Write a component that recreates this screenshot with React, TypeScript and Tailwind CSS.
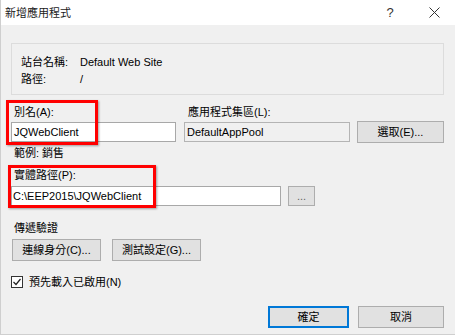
import React from 'react'

const font = { fontFamily: '"Liberation Sans", "Noto Sans CJK TC", sans-serif' }

function Btn({ children, className = '' }: { children: React.ReactNode; className?: string }) {
  return (
    <button className={`h-[22px] bg-[#e1e1e1] border border-[#adadad] text-[11px] text-black flex items-center justify-center ${className}`}>
      {children}
    </button>
  )
}

export default function App() {
  return (
    <div className="relative w-[455px] h-[335px] flex flex-col bg-[#f0f0f0] text-[11px] text-black leading-[14px] border-l border-b border-[#cfcfcf] overflow-hidden" style={font}>
      {/* title bar */}
      <div className="h-[25px] bg-white flex items-center pl-[4px] shrink-0">
        <span className="text-[11px] text-[#1a1a1a]">新增應用程式</span>
        <span className="ml-auto w-[16px] text-center text-[13px] text-[#333]">?</span>
        <svg className="ml-[31px] mr-[15px]" width="11" height="11" viewBox="0 0 11 11">
          <path d="M0.5 0.5 L10.5 10.5 M10.5 0.5 L0.5 10.5" stroke="#333" strokeWidth="1" />
        </svg>
      </div>

      <div className="flex flex-col pl-[10px] pr-[11px]">
        {/* site info */}
        <div className="mt-[18px] h-[52px] border border-[#dcdcdc] pl-[9px] pt-[11px] flex flex-col gap-[3px]">
          <div className="flex"><span className="w-[59px]">站台名稱:</span><span>Default Web Site</span></div>
          <div className="flex"><span className="w-[59px]">路徑:</span><span>/</span></div>
        </div>

        {/* alias + pool */}
        <div className="mt-[10px] flex items-end">
          <div className="flex flex-col w-[165px]">
            <span className="pl-[3px]">別名(A):</span>
            <div className="mt-[3px] h-[20px] bg-white border border-[#a8a8a8] flex items-center px-[2px]">JQWebClient</div>
          </div>
          <div className="flex flex-col w-[166px] ml-[8px]">
            <span className="pl-[4px]">應用程式集區(L):</span>
            <div className="mt-[3px] h-[20px] bg-[#f0f0f0] border border-[#b4b4b4] flex items-center px-[2px]">DefaultAppPool</div>
          </div>
          <Btn className="ml-[7px] w-[87px] mb-[-1px]">選取(E)...</Btn>
        </div>

        <span className="mt-[4px] pl-[3px]">範例: 銷售</span>

        {/* physical path */}
        <span className="mt-[8px] pl-[3px]">實體路徑(P):</span>
        <div className="mt-[4px] flex items-center">
          <div className="w-[270px] h-[20px] bg-white border border-[#a8a8a8] flex items-center px-[1px]">C:\EEP2015\JQWebClient</div>
          <Btn className="ml-[7px] w-[27px] !h-[20px] !text-[#666]">...</Btn>
        </div>

        {/* pass-through auth */}
        <span className="mt-[15px] pl-[3px]">傳遞驗證</span>
        <div className="mt-[4px] flex pl-[1px] gap-[11px]">
          <Btn className="w-[89px]">連線身分(C)...</Btn>
          <Btn className="w-[89px]">測試設定(G)...</Btn>
        </div>

        <div className="mt-[14px] flex items-center">
          <div className="w-[12px] h-[12px] bg-white border border-[#333] flex items-center justify-center">
            <svg width="10" height="10" viewBox="0 0 10 10"><path d="M1.5 5 L4 7.5 L8.5 2" stroke="#222" strokeWidth="1.2" fill="none" /></svg>
          </div>
          <span className="ml-[6px]">預先載入已啟用(N)</span>
        </div>

        <div className="mt-[17px] flex justify-end">
          <Btn className="w-[81px] !border-2 !border-[#0078d7]">確定</Btn>
          <Btn className="w-[86px] ml-[9px]">取消</Btn>
        </div>
      </div>

      {/* red annotation boxes */}
      <div className="absolute left-[5px] top-[100px] w-[92px] h-[45px] border-[3px] border-[#ff0000] shadow-[1px_1px_2px_rgba(0,0,0,0.35)] pointer-events-none" />
      <div className="absolute left-[7px] top-[165px] w-[148px] h-[43px] border-[3px] border-[#ff0000] shadow-[1px_1px_2px_rgba(0,0,0,0.35)] pointer-events-none" />
    </div>
  )
}
